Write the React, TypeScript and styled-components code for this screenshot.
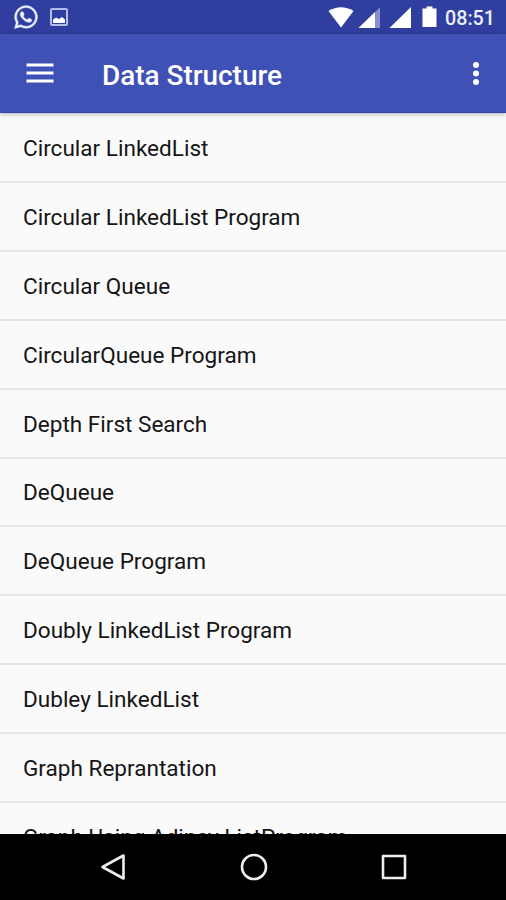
import React from "react";
import styled, { createGlobalStyle } from "styled-components";
import { FaWhatsapp } from "react-icons/fa";

const GlobalStyle = createGlobalStyle`
  * { box-sizing: border-box; }
  html, body { margin: 0; padding: 0; }
  body { font-family: Roboto, sans-serif; background: #000; overflow: hidden; }
`;

const Screen = styled.div`
  width: 506px;
  height: 900px;
  display: flex;
  flex-direction: column;
  overflow: hidden;
`;

const StatusBar = styled.header`
  flex: none;
  height: 34px;
  display: flex;
  justify-content: space-between;
  background: #303f9f;
  color: #fff;
`;

const StatusGroup = styled.div`
  display: flex;
  align-items: center;
  svg { display: block; }
`;

const Notifications = styled(StatusGroup)`
  padding-left: 13px;
  gap: 11px;
  color: #f0f2ff;
`;

const WhatsappIcon = styled(FaWhatsapp)`
  stroke: currentColor;
  stroke-width: 10px;
`;

const Clock = styled.time`
  width: 61px;
  font-size: 19.7px;
  font-weight: 500;
  line-height: 34px;
  padding-top: 3px;
  color: #eceefb;
`;

const Toolbar = styled.div`
  flex: none;
  height: 79px;
  display: flex;
  align-items: center;
  padding: 0 18px 0 26px;
  background: #3f51b5;
  border-bottom: 1px solid #2f46ab;
  box-shadow: 0 1px 5px rgba(0, 0, 0, 0.3);
  z-index: 1;
`;

const IconButton = styled.button`
  display: flex;
  padding: 0;
  border: 0;
  background: none;
  color: #fff;
`;

const Title = styled.h1`
  flex: 1;
  margin: 5px 0 0 48px;
  font-size: 27.9px;
  line-height: 36px;
  font-weight: 500;
  color: #fff;
`;

const List = styled.ul`
  flex: 1;
  min-height: 0;
  margin: 0;
  padding: 0;
  list-style: none;
  overflow: hidden;
  background: #fafafa;
`;

const Row = styled.li`
  height: 68.9px;
  padding: 3px 23px 0;
  font-size: 22.55px;
  line-height: 66px;
  color: #151515;
  white-space: nowrap;

  &::after {
    content: "";
    display: block;
    height: 2px;
    margin: -1px -23px 0;
    background: #e6e6e6;
  }
`;

const NavBar = styled.nav`
  flex: none;
  height: 66px;
  display: flex;
  justify-content: center;
  align-items: center;
  gap: 110px;
  padding-left: 1px;
  background: #000;
`;

const topics = [
  "Circular LinkedList",
  "Circular LinkedList Program",
  "Circular Queue",
  "CircularQueue Program",
  "Depth First Search",
  "DeQueue",
  "DeQueue Program",
  "Doubly LinkedList Program",
  "Dubley LinkedList",
  "Graph Reprantation",
  "Graph Using Adjncy ListProgram",
];

const PictureIcon = () => (
  <svg width="18" height="18" viewBox="0 0 18 18">
    <rect x="1" y="1" width="16" height="16" rx="1" fill="none" stroke="#b4bce8" strokeWidth="2" />
    <path d="M3 15v-3.500l3-2 3 1.500 3-2 3 2.500V15z" fill="#fff" />
  </svg>
);

const SignalIcons = () => (
  <svg width="117" height="34" viewBox="0 0 117 34" fill="#fff">
    <path d="M0.500 11Q13 3.500 25.500 11L13 27.500z" />
    <path d="M52 7.500V28H30.500z" fill="#8791cd" />
    <path d="M47 12V28H30.500z" />
    <path d="M83 7V28H61.500z" />
    <path d="M98.500 6.500h6v2h4v18.500h-14v-18.500h4z" />
  </svg>
);

export default function App() {
  return (
    <Screen>
      <GlobalStyle />
      <StatusBar>
        <Notifications>
          <WhatsappIcon size={26} />
          <PictureIcon />
        </Notifications>
        <StatusGroup>
          <SignalIcons />
          <Clock>08:51</Clock>
        </StatusGroup>
      </StatusBar>
      <Toolbar>
        <IconButton aria-label="Menu">
          <svg width="28" height="22" viewBox="0 0 28 22" fill="currentColor">
            <path d="M.5 1.500h27v3H.5zM.5 9.500h27v3H.5zM.5 17.500h27v3H.5z" />
          </svg>
        </IconButton>
        <Title>Data Structure</Title>
        <IconButton aria-label="More options">
          <svg width="24" height="26" viewBox="0 0 24 26" fill="currentColor">
            <circle cx="12" cy="5" r="3" />
            <circle cx="12" cy="13.500" r="3" />
            <circle cx="12" cy="22" r="3" />
          </svg>
        </IconButton>
      </Toolbar>
      <List>
        {topics.map((topic) => (
          <Row key={topic}>{topic}</Row>
        ))}
      </List>
      <NavBar>
        <IconButton aria-label="Back">
          <svg width="30" height="30" viewBox="0 0 30 30" fill="none" stroke="#eee" strokeWidth="2.600" strokeLinejoin="round">
            <path d="M24.500 3.500v23L3.500 15z" />
          </svg>
        </IconButton>
        <IconButton aria-label="Home">
          <svg width="30" height="30" viewBox="0 0 30 30" fill="none" stroke="#eee" strokeWidth="2.600">
            <circle cx="15" cy="15" r="12" />
          </svg>
        </IconButton>
        <IconButton aria-label="Recent apps">
          <svg width="30" height="30" viewBox="0 0 30 30" fill="none" stroke="#eee" strokeWidth="2.600" strokeLinejoin="round">
            <rect x="4" y="4" width="22" height="22" />
          </svg>
        </IconButton>
      </NavBar>
    </Screen>
  );
}
